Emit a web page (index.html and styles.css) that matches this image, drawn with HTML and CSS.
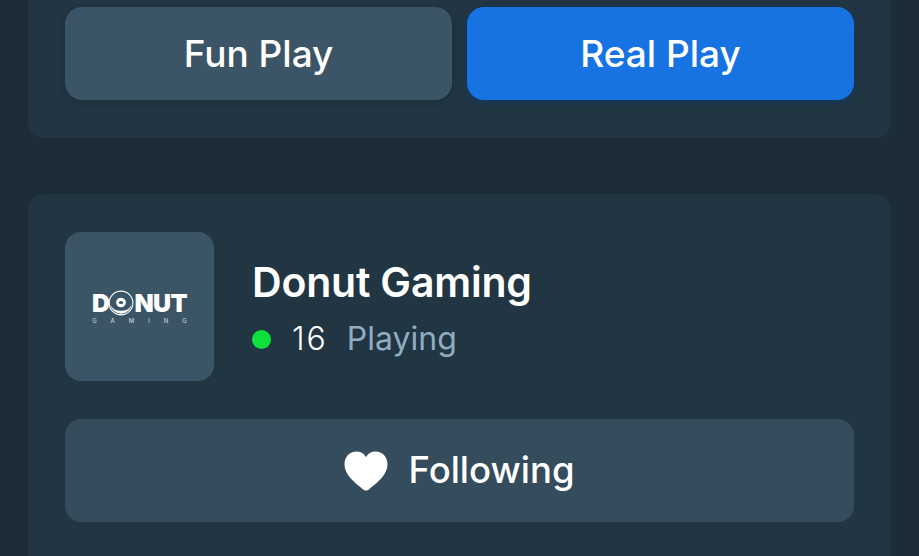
FILE: index.html
```html
<!DOCTYPE html>
<html lang="en">
<head>
<meta charset="utf-8">
<title>Donut Gaming</title>
<link rel="stylesheet" href="styles.css">
</head>
<body>
<main class="page">
  <section class="card play-card">
    <button class="btn btn-fun">Fun Play</button>
    <button class="btn btn-real">Real Play</button>
  </section>
  <section class="card provider-card">
    <div class="provider">
      <div class="logo-tile">
        <div class="logo">
          <div class="logo-word">
            <span>D</span>
            <svg class="logo-donut" viewBox="0 0 28 28" aria-hidden="true">
              <circle cx="14" cy="14" r="12.8" fill="none" stroke="#fff" stroke-width="1.2"/>
              <path d="M2.5 15.5A11.6 11.6 0 0 0 25.5 15.5A12 9.5 0 0 1 2.5 15.5Z" fill="#fff"/>
              <circle cx="14" cy="13.5" r="5.2" fill="#fff"/>
              <ellipse cx="14" cy="13.5" rx="2.4" ry="1.7" fill="#3b5566"/>
            </svg>
            <span>NUT</span>
          </div>
          <div class="logo-sub">GAMING</div>
        </div>
      </div>
      <div class="provider-info">
        <h2 class="provider-name">Donut Gaming</h2>
        <div class="status">
          <span class="dot"></span>
          <span class="count">16</span>
          <span class="label">Playing</span>
        </div>
      </div>
    </div>
    <button class="btn-follow">
      <svg class="heart" viewBox="0 0 44 40" aria-hidden="true">
        <path d="M22 39.5C20.8 39.5 19.8 38.9 18.6 37.9C10 31 .5 23.5.5 13.2C.5 6 5.8.6 12.4.6C16.4.6 19.8 2.4 22 6C24.2 2.4 27.6.6 31.6.6C38.2.6 43.5 6 43.5 13.2C43.5 23.5 34 31 25.4 37.9C24.2 38.9 23.2 39.5 22 39.5Z" fill="#fff"/>
      </svg>
      <span>Following</span>
    </button>
  </section>
</main>
</body>
</html>
```

FILE: styles.css
```css
* { box-sizing: border-box; }

html, body {
  margin: 0;
  height: 100%;
  overflow: hidden;
  background: #1c2d38;
}

body {
  font-family: "Inter", "Liberation Sans", sans-serif;
  color: #fff;
}

.page {
  display: flex;
  flex-direction: column;
  gap: 56px;
  padding: 0 28px;
}

.card {
  background: #213542;
  border-radius: 0 0 16px 16px;
}

.play-card {
  display: grid;
  grid-template-columns: 1fr 1fr;
  gap: 15px;
  height: 138px;
  padding: 7px 37px 38px;
}

.provider-card {
  border-radius: 16px 16px 0 0;
  height: 362px;
  padding: 38px 37px 0;
}

.btn {
  border: 0;
  border-radius: 17px;
  font: 500 37px/1 "Inter", "Liberation Sans", sans-serif;
  color: #fff;
  padding: 0;
}

.btn-fun {
  background: #3b5566;
  box-shadow: 0 2px 5px rgba(20, 34, 44, .35);
}

.btn-real {
  background: #1773e2;
  box-shadow: 0 2px 6px rgba(8, 60, 120, .7);
}

.provider {
  display: flex;
  align-items: center;
  gap: 38px;
}

.logo-tile {
  display: flex;
  align-items: center;
  justify-content: center;
  width: 149px;
  height: 149px;
  border-radius: 16px;
  background: #3b5566;
}

.logo {
  display: flex;
  flex-direction: column;
  align-items: center;
  gap: 3px;
  margin-top: 1px;
}

.logo-word {
  display: flex;
  align-items: center;
  height: 24px;
  font: 900 25px/24px "Inter", "Liberation Sans", sans-serif;
  letter-spacing: -.6px;
}

.logo-donut {
  width: 26px;
  height: 26px;
  margin: 0 0 0 -1px;
}

.logo-sub {
  font: 500 6px/6px "Inter", "Liberation Sans", sans-serif;
  letter-spacing: 14px;
  margin-right: -14px;
  color: #c3ced6;
}

.provider-info {
  display: flex;
  flex-direction: column;
  gap: 15px;
  padding-top: 4px;
}

.provider-name {
  margin: 0;
  font: 600 41px/46px "Inter", "Liberation Sans", sans-serif;
  letter-spacing: -.2px;
}

.status {
  display: flex;
  align-items: center;
  font-size: 32px;
  font-weight: 300;
  line-height: 38px;
}

.dot {
  width: 19px;
  height: 19px;
  border-radius: 50%;
  background: #0fe03c;
  margin-right: 21px;
}

.count {
  margin-right: 19px;
  letter-spacing: 2px;
}

.label {
  color: #8fadc0;
  font-weight: 400;
}

.btn-follow {
  display: flex;
  align-items: center;
  justify-content: center;
  gap: 20px;
  width: 100%;
  height: 103px;
  margin-top: 38px;
  border: 0;
  border-radius: 16px;
  background: #344c5b;
  color: #fff;
  font: 500 36.5px/1 "Inter", "Liberation Sans", sans-serif;
}

.heart {
  width: 44px;
  height: 40px;
}
```
